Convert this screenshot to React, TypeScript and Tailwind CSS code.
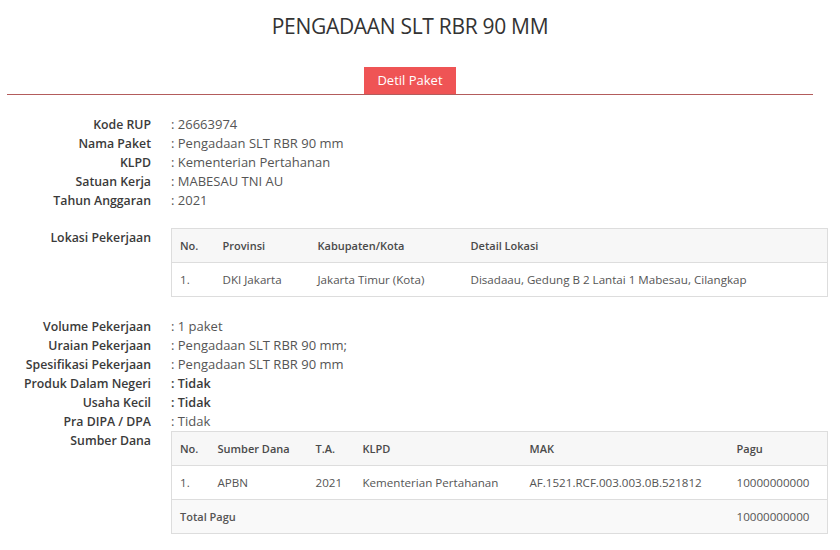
import React from 'react';

type Row = { label: string; value: string; bold?: boolean };

const topRows: Row[] = [
  { label: 'Kode RUP', value: '26663974' },
  { label: 'Nama Paket', value: 'Pengadaan SLT RBR 90 mm' },
  { label: 'KLPD', value: 'Kementerian Pertahanan' },
  { label: 'Satuan Kerja', value: 'MABESAU TNI AU' },
  { label: 'Tahun Anggaran', value: '2021' },
];

const midRows: Row[] = [
  { label: 'Volume Pekerjaan', value: '1 paket' },
  { label: 'Uraian Pekerjaan', value: 'Pengadaan SLT RBR 90 mm;' },
  { label: 'Spesifikasi Pekerjaan', value: 'Pengadaan SLT RBR 90 mm' },
  { label: 'Produk Dalam Negeri', value: 'Tidak', bold: true },
  { label: 'Usaha Kecil', value: 'Tidak', bold: true },
  { label: 'Pra DIPA / DPA', value: 'Tidak' },
];

const label = 'text-right font-semibold text-[12.3px] text-[#3a3a3a]';

const InfoRow = ({ label: l, value, bold }: Row) => (
  <>
    <div className={label}>{l}</div>
    <div className={bold ? 'font-semibold text-[12.6px] text-[#3a3a3a]' : 'text-[#555]'}>: {value}</div>
  </>
);

const th = 'px-2 h-[34px] text-left font-semibold text-[11px] text-[#4a4a4a]';
const td = 'px-2 h-[34px] text-[#555]';

export default function App() {
  return (
    <div className="bg-white min-h-[550px] text-[13px] leading-[19px]" style={{ fontFamily: '"Open Sans", "Liberation Sans", sans-serif' }}>
      <div className="mx-[7px] w-[806px]">
        <h1 className="pt-[13px] text-center text-[21px] leading-[26px] text-[#333] tracking-[-0.3px]">PENGADAAN SLT RBR 90 MM</h1>
        <div className="mt-[28px] flex justify-center border-b border-[#b35c5c]">
          <div className="w-[92px] h-[27px] bg-[#ef5455] text-white text-[13px] flex items-center justify-center">Detil Paket</div>
        </div>
      </div>

      <div className="pt-[20px] grid grid-cols-[151px_657px] gap-x-5">
        {topRows.map(r => <InfoRow key={r.label} {...r} />)}

        <div className={`mt-[18px] ${label}`}>Lokasi Pekerjaan</div>
        <div className="mt-[18px]">
          <table className="w-full border-collapse border border-[#ddd] text-[11.6px]">
            <thead>
              <tr className="bg-[#f7f7f7] border-b border-[#ddd]">
                <th className={`${th} w-[43px]`}>No.</th>
                <th className={`${th} w-[95px]`}>Provinsi</th>
                <th className={`${th} w-[153px]`}>Kabupaten/Kota</th>
                <th className={th}>Detail Lokasi</th>
              </tr>
            </thead>
            <tbody>
              <tr>
                <td className={td}>1.</td>
                <td className={td}>DKI Jakarta</td>
                <td className={td}>Jakarta Timur (Kota)</td>
                <td className={td}>Disadaau, Gedung B 2 Lantai 1 Mabesau, Cilangkap</td>
              </tr>
            </tbody>
          </table>
        </div>

        <div className="mt-[20px] col-span-2 grid grid-cols-subgrid">
          {midRows.map(r => <InfoRow key={r.label} {...r} />)}
        </div>

        <div className={label}>Sumber Dana</div>
        <div>
          <table className="w-full border-collapse border border-[#ddd] text-[11.6px]">
            <thead>
              <tr className="bg-[#f7f7f7] border-b border-[#ddd]">
                <th className={`${th} w-[38px]`}>No.</th>
                <th className={`${th} w-[98px]`}>Sumber Dana</th>
                <th className={`${th} w-[47px]`}>T.A.</th>
                <th className={`${th} w-[167px]`}>KLPD</th>
                <th className={`${th} w-[207px]`}>MAK</th>
                <th className={th}>Pagu</th>
              </tr>
            </thead>
            <tbody>
              <tr className="border-b border-[#ddd]">
                <td className={td}>1.</td>
                <td className={td}>APBN</td>
                <td className={td}>2021</td>
                <td className={td}>Kementerian Pertahanan</td>
                <td className={td}>AF.1521.RCF.003.003.0B.521812</td>
                <td className={td}>10000000000</td>
              </tr>
              <tr className="bg-[#f9f9f9]">
                <td colSpan={5} className={`${td} font-semibold text-[11px] text-[#4a4a4a]`}>Total Pagu</td>
                <td className={td}>10000000000</td>
              </tr>
            </tbody>
          </table>
        </div>
      </div>
    </div>
  );
}
